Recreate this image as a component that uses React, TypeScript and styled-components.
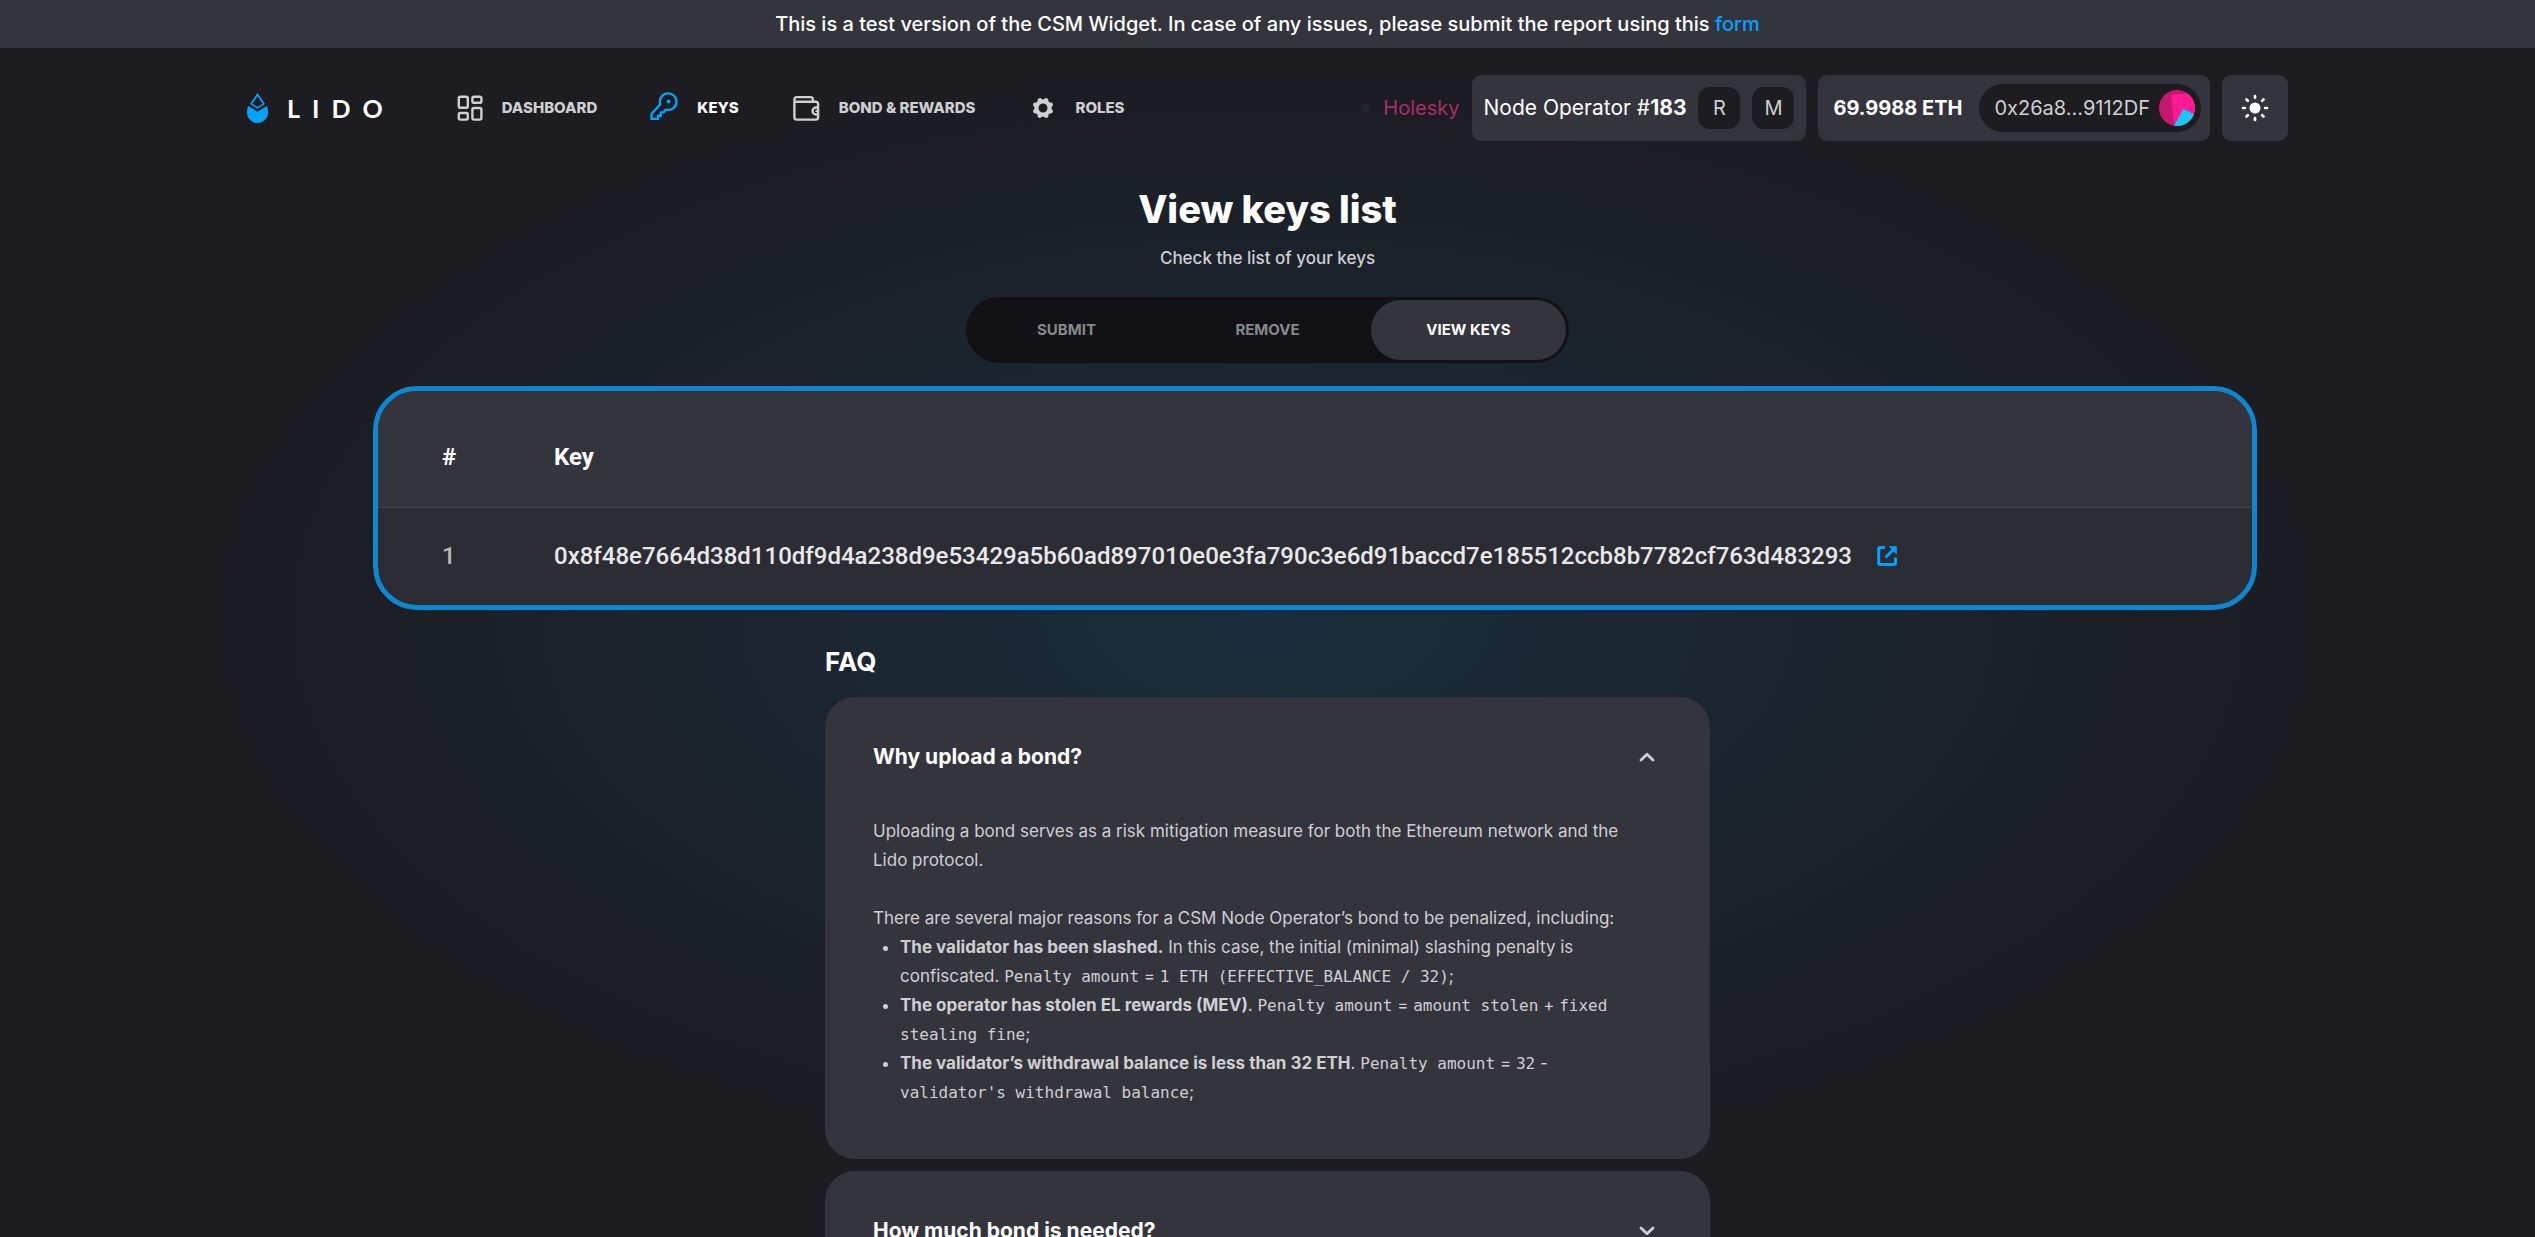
import React, { useState } from 'react';
import styled, { createGlobalStyle, css } from 'styled-components';

const color = {
  bg: '#1c1c21',
  surface: '#34343d',
  row: '#2c2c35',
  line: '#45454f',
  accent: '#00a3ff',
  frame: '#0e87d2',
  text: '#ffffff',
  soft: '#cfcfd1',
  muted: '#88888b',
};

const sans = '"Inter", "Liberation Sans", sans-serif';
const mono = '"DejaVu Sans Mono", "Liberation Mono", monospace';

const GlobalStyle = createGlobalStyle`
  *, *::before, *::after { box-sizing: border-box; }
  body {
    margin: 0;
    background: ${color.bg};
    color: ${color.text};
    font-family: ${sans};
  }
  h1, h2, h3, p, ul { margin: 0; padding: 0; }
  a { color: inherit; text-decoration: none; }
  button { margin: 0; padding: 0; border: 0; background: none; color: inherit; font: inherit; cursor: pointer; }
  svg { display: block; flex: none; }
`;

const Page = styled.div`
  height: 100vh;
  overflow: hidden auto;
  scrollbar-width: none;
  background: radial-gradient(ellipse 42% 45% at 50% 50%, #1a2d3c 0%, ${color.bg} 100%);
`;

const Banner = styled.div`
  padding: 9px 16px;
  background: ${color.surface};
  font-size: 20px;
  font-weight: 500;
  line-height: 30px;
  text-align: center;

  a { color: ${color.accent}; }
`;

const Container = styled.div`
  width: 100%;
  max-width: 2089px;
  margin: 0 auto;
  padding: 0 24px;
`;

const Header = styled.header`
  display: flex;
  align-items: center;
  padding: 27px 0;
`;

const Logo = styled.a`
  display: flex;
  align-items: center;
  gap: 19px;
  margin-right: 57px;
`;

const Wordmark = styled.span`
  font-family: "Lato", ${sans};
  font-size: 25px;
  font-weight: 700;
  line-height: 36px;
  letter-spacing: 12px;
`;

const Nav = styled.nav`
  display: flex;
  align-items: center;
  gap: 50px;
`;

const NavItem = styled.a<{ $active?: boolean }>`
  display: flex;
  align-items: center;
  gap: 14px;
  font-size: 15px;
  font-weight: 800;
  line-height: 36px;
  color: ${(p) => (p.$active ? color.text : color.soft)};

  svg { color: ${(p) => (p.$active ? color.accent : color.soft)}; }
`;

const HeaderActions = styled.div`
  display: flex;
  align-items: center;
  gap: 12px;
  margin-left: auto;
  font-size: 20px;
  line-height: 30px;
`;

const Network = styled.span`
  display: flex;
  align-items: center;
  gap: 13px;
  color: #a92e68;

  &::before {
    content: '';
    width: 9px;
    height: 9px;
    border-radius: 50%;
    background: #21272b;
  }
`;

const chip = css`
  display: flex;
  align-items: center;
  height: 66px;
  border-radius: 9px;
  background: ${color.surface};
`;

const OperatorChip = styled.button`
  ${chip}
  gap: 12px;
  padding: 0 12px;
`;

const OperatorName = styled.span`
  font-size: 21px;
`;

const Role = styled.span`
  display: flex;
  align-items: center;
  justify-content: center;
  width: 42px;
  height: 42px;
  border-radius: 12px;
  background: ${color.bg};
  color: ${color.soft};
`;

const WalletChip = styled.button`
  ${chip}
  gap: 17px;
  padding: 0 9px 0 15px;
  font-weight: 700;
`;

const Address = styled.span`
  display: flex;
  align-items: center;
  gap: 9px;
  height: 48px;
  padding: 0 6px 0 15px;
  border-radius: 24px;
  background: ${color.bg};
  color: ${color.soft};
  font-weight: 400;
`;

const ThemeButton = styled.button`
  ${chip}
  justify-content: center;
  width: 66px;
`;

const Heading = styled.div`
  margin-top: 17px;
  text-align: center;
`;

const Title = styled.h1`
  font-size: 38px;
  font-weight: 800;
  line-height: 48px;
`;

const Subtitle = styled.p`
  margin-top: 10px;
  color: ${color.soft};
  font-size: 17px;
  font-weight: 500;
  line-height: 30px;
`;

const Tabs = styled.div`
  display: grid;
  grid-template-columns: repeat(3, 195px);
  gap: 6px;
  width: fit-content;
  margin: 24px auto 0;
  padding: 3px;
  border-radius: 33px;
  background: #121216;
`;

const Tab = styled.a<{ $active?: boolean }>`
  border-radius: 30px;
  background: ${(p) => (p.$active ? color.surface : 'transparent')};
  color: ${(p) => (p.$active ? color.text : color.muted)};
  font-size: 15px;
  font-weight: 700;
  line-height: 60px;
  text-align: center;
`;

const KeysFrame = styled.section`
  margin: 23px 31px 0 126px;
  overflow: hidden;
  border: 5px solid ${color.frame};
  border-radius: 44px;
  background: ${color.row};
`;

const KeysTable = styled.table`
  width: 100%;
  border-collapse: collapse;
  font-family: "Roboto", ${sans};
  font-size: 24px;
  line-height: 32px;
  text-align: left;

  thead { background: ${color.surface}; }
  th { height: 116px; padding: 16px 0 0; border-bottom: 1px solid ${color.line}; font-weight: 700; }
  td { height: 98px; padding: 0; color: #e8e8e9; font-weight: 500; }
  th:first-child, td:first-child { width: 176px; padding-left: 64px; }
  td:first-child { color: #b8b8bb; }
`;

const KeyValue = styled.span`
  display: flex;
  align-items: center;
  gap: 24px;

  a { color: ${color.accent}; }
`;

const Faq = styled.section`
  width: 100%;
  max-width: 885px;
  margin: 34px auto 0;
  padding-bottom: 48px;
`;

const FaqTitle = styled.h2`
  margin-bottom: 17px;
  font-size: 26px;
  font-weight: 700;
  line-height: 36px;
`;

const Panel = styled.article`
  margin-bottom: 12px;
  border-radius: 30px;
  background: ${color.surface};
`;

const Question = styled.button`
  display: flex;
  align-items: center;
  justify-content: space-between;
  width: 100%;
  padding: 45px 54px 45px 48px;
  font-size: 21px;
  font-weight: 700;
  line-height: 30px;

  svg { color: ${color.soft}; }
`;

const Answer = styled.div`
  padding: 0 72px 52px 48px;
  color: ${color.soft};
  font-size: 17px;
  line-height: 29px;

  p + p { margin-top: 29px; }
  ul { padding-left: 27px; }
  code { font-family: ${mono}; font-size: 16px; }
`;

const stroke = {
  fill: 'none',
  stroke: 'currentColor',
  strokeWidth: 2.4,
  strokeLinecap: 'round' as const,
  strokeLinejoin: 'round' as const,
};

const LidoDrop = () => (
  <svg width="21" height="30" viewBox="0 0 63 90" fill={color.accent} aria-hidden="true">
    <path fillRule="evenodd" d="M31.5 0 54 33 31.5 47 9 33ZM31.5 10 15.500 32 31.5 41 47.500 32Z" />
    <path d="M4 39 31.500 56 59 39C65 52 65 66 56 78 49 86 41 90 31.500 90S14 86 7 78C-2 66-2 52 4 39Z" />
  </svg>
);

const DashboardIcon = () => (
  <svg width="36" height="36" viewBox="0 0 36 36" aria-hidden="true" {...stroke}>
    <rect x="6.800" y="6.800" width="9" height="11" rx="1.600" />
    <rect x="20.400" y="6.800" width="9" height="6" rx="1.600" />
    <rect x="6.800" y="23" width="9" height="6.600" rx="1.600" />
    <rect x="20.400" y="18" width="9" height="11.600" rx="1.600" />
  </svg>
);

const KeyIcon = () => (
  <svg width="36" height="36" viewBox="0 0 36 36" aria-hidden="true" {...stroke}>
    <path d="M13.300 14.200A8.300 8.300 0 1 1 18.800 19.600L16.600 22.400H13.800V25.700H11V28.900H4.500V24Z" />
    <circle cx="21.600" cy="11.500" r="2.100" fill="currentColor" stroke="none" />
  </svg>
);

const WalletIcon = () => (
  <svg width="36" height="36" viewBox="0 0 36 36" aria-hidden="true" {...stroke}>
    <path d="M5.400 9.500a2.400 2.400 0 0 1 2.400-2.400H21.500a2.400 2.400 0 0 1 2.400 2.400V11.800H26.700a2.400 2.400 0 0 1 2.400 2.400V27.200a2.400 2.400 0 0 1-2.400 2.400H7.800a2.400 2.400 0 0 1-2.400-2.400ZM5.400 11.800H24M29.100 17.500H27a3.500 3.500 0 0 0 0 7H29.100" />
    <path d="M27.200 21H28.500" strokeWidth="2" />
  </svg>
);

const GearIcon = () => (
  <svg width="36" height="36" viewBox="0 0 36 36" fill="none" stroke="currentColor" aria-hidden="true">
    <circle cx="18" cy="18" r="6.600" strokeWidth="4.200" />
    {[0, 1, 2, 3, 4, 5, 6, 7].map((i) => (
      <path
        key={i}
        d="M18 10.500V9.600"
        strokeWidth="4.400"
        strokeLinecap="round"
        transform={`rotate(${i * 45 + 22.5} 18 18)`}
      />
    ))}
  </svg>
);

const SunIcon = () => (
  <svg width="36" height="36" viewBox="0 0 36 36" aria-hidden="true" {...stroke} strokeWidth={2.700}>
    <circle cx="18" cy="18" r="5.500" fill="currentColor" stroke="none" />
    {[0, 1, 2, 3, 4, 5, 6, 7].map((i) => (
      <path key={i} d="M18 7.800V6" transform={`rotate(${i * 45} 18 18)`} />
    ))}
  </svg>
);

const Avatar = () => (
  <svg width="36" height="36" viewBox="0 0 36 36" aria-hidden="true">
    <clipPath id="avatar-round">
      <circle cx="18" cy="18" r="18" />
    </clipPath>
    <g clipPath="url(#avatar-round)">
      <path d="M0 0H36V36H0Z" fill="#c8176f" />
      <path d="M12 5 36 2.500V36H15.500Z" fill="#ff1a94" />
      <path d="M24.200 19 38 25.500V38H13.800Z" fill="#18c7f3" />
    </g>
  </svg>
);

const ExternalIcon = () => (
  <svg width="22" height="22" viewBox="0 0 22 22" aria-hidden="true" {...stroke} strokeLinecap="butt" strokeWidth={3}>
    <path d="M9 2.500H4.200a1.500 1.500 0 0 0-1.500 1.500V18a1.500 1.500 0 0 0 1.500 1.500H18a1.500 1.500 0 0 0 1.500-1.500V12.500M9.500 12.500 18 4" />
    <path d="M12.500 1.200H20.800V9.500Z" fill="currentColor" stroke="none" />
  </svg>
);

const Chevron = ({ up }: { up: boolean }) => (
  <svg width="18" height="18" viewBox="0 0 18 18" aria-hidden="true" {...stroke} strokeWidth={2.800}>
    <path d={up ? 'M3 12 9 6.200 15 12' : 'M3 6 9 11.800 15 6'} />
  </svg>
);

const keys = ['0x8f48e7664d38d110df9d4a238d9e53429a5b60ad897010e0e3fa790c3e6d91baccd7e185512ccb8b7782cf763d483293'];

const faqItems: { question: string; answer: React.ReactNode }[] = [
  {
    question: 'Why upload a bond?',
    answer: (
      <>
        <p>
          Uploading a bond serves as a risk mitigation measure for both the Ethereum network and the Lido protocol.
        </p>
        <p>There are several major reasons for a CSM Node Operator’s bond to be penalized, including:</p>
        <ul>
          <li>
            <b>The validator has been slashed.</b> In this case, the initial (minimal) slashing penalty is
            confiscated. <code>Penalty amount</code> = <code>1 ETH (EFFECTIVE_BALANCE / 32)</code>;
          </li>
          <li>
            <b>The operator has stolen EL rewards (MEV)</b>. <code>Penalty amount</code> ={' '}
            <code>amount stolen</code> + <code>fixed stealing fine</code>;
          </li>
          <li>
            <b>The validator’s withdrawal balance is less than 32 ETH</b>. <code>Penalty amount</code> ={' '}
            <code>32</code> - <code>validator's withdrawal balance</code>;
          </li>
        </ul>
      </>
    ),
  },
  {
    question: 'How much bond is needed?',
    answer: null,
  },
];

export default function App() {
  const [open, setOpen] = useState<number | null>(0);

  return (
    <Page>
      <GlobalStyle />
      <Banner>
        This is a test version of the CSM Widget. In case of any issues, please submit the report using this{' '}
        <a href="#form">form</a>
      </Banner>
      <Container>
        <Header>
          <Logo href="#home">
            <LidoDrop />
            <Wordmark>LIDO</Wordmark>
          </Logo>
          <Nav>
            <NavItem href="#dashboard">
              <DashboardIcon />
              DASHBOARD
            </NavItem>
            <NavItem href="#keys" $active>
              <KeyIcon />
              KEYS
            </NavItem>
            <NavItem href="#bond">
              <WalletIcon />
              BOND &amp; REWARDS
            </NavItem>
            <NavItem href="#roles">
              <GearIcon />
              ROLES
            </NavItem>
          </Nav>
          <HeaderActions>
            <Network>Holesky</Network>
            <OperatorChip type="button">
              <OperatorName>
                Node Operator #<b>183</b>
              </OperatorName>
              <Role>R</Role>
              <Role>M</Role>
            </OperatorChip>
            <WalletChip type="button">
              69.9988 ETH
              <Address>
                0x26a8...9112DF
                <Avatar />
              </Address>
            </WalletChip>
            <ThemeButton type="button" aria-label="Switch theme">
              <SunIcon />
            </ThemeButton>
          </HeaderActions>
        </Header>

        <main>
          <Heading>
            <Title>View keys list</Title>
            <Subtitle>Check the list of your keys</Subtitle>
          </Heading>
          <Tabs>
            <Tab href="#submit">SUBMIT</Tab>
            <Tab href="#remove">REMOVE</Tab>
            <Tab href="#view" $active>
              VIEW KEYS
            </Tab>
          </Tabs>

          <KeysFrame>
            <KeysTable>
              <thead>
                <tr>
                  <th scope="col">#</th>
                  <th scope="col">Key</th>
                </tr>
              </thead>
              <tbody>
                {keys.map((key, i) => (
                  <tr key={key}>
                    <td>{i + 1}</td>
                    <td>
                      <KeyValue>
                        {key}
                        <a href="#explorer" aria-label="Open in explorer">
                          <ExternalIcon />
                        </a>
                      </KeyValue>
                    </td>
                  </tr>
                ))}
              </tbody>
            </KeysTable>
          </KeysFrame>

          <Faq>
            <FaqTitle>FAQ</FaqTitle>
            {faqItems.map((item, i) => (
              <Panel key={item.question}>
                <h3>
                  <Question
                    type="button"
                    aria-expanded={open === i}
                    onClick={() => setOpen(open === i ? null : i)}
                  >
                    {item.question}
                    <Chevron up={open === i} />
                  </Question>
                </h3>
                {open === i && item.answer && <Answer>{item.answer}</Answer>}
              </Panel>
            ))}
          </Faq>
        </main>
      </Container>
    </Page>
  );
}
